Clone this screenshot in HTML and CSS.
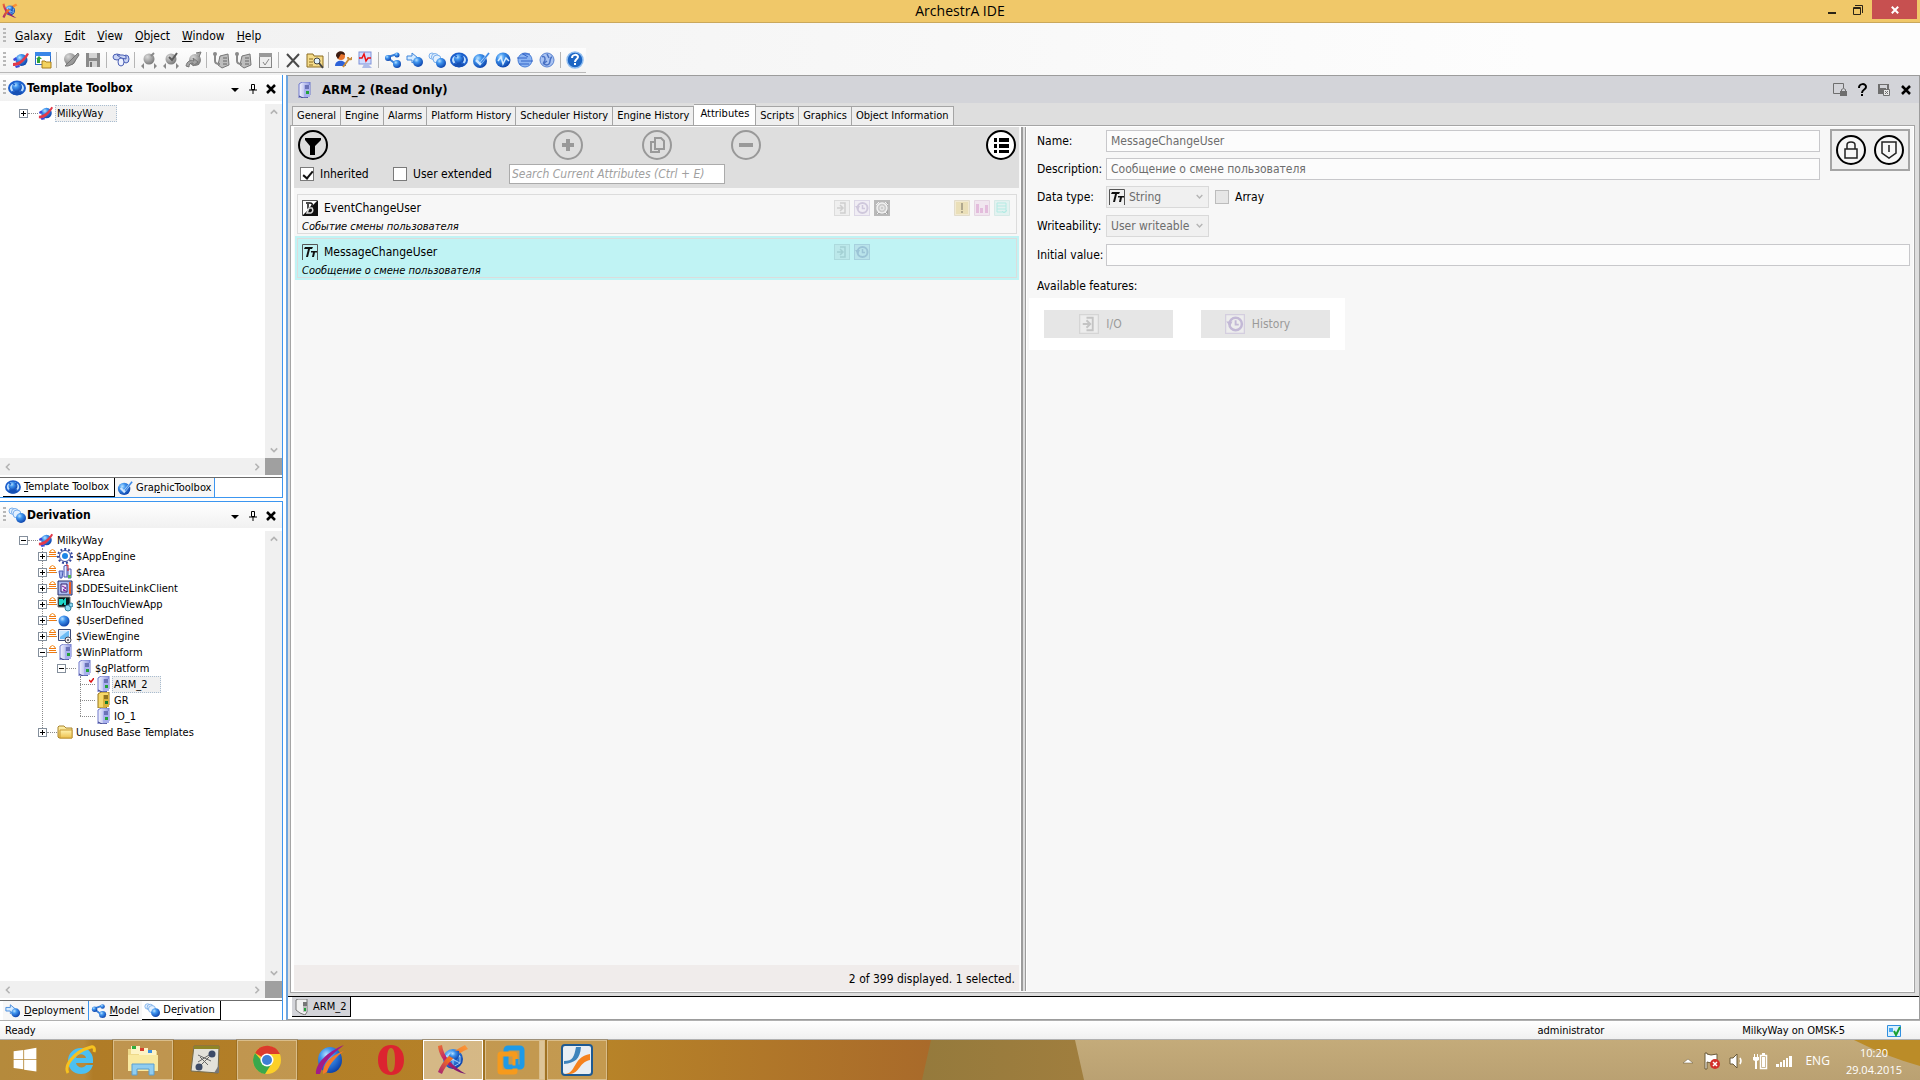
FILE: index.html
```html
<!DOCTYPE html>
<html lang="en">
<head>
<meta charset="utf-8">
<title>ArchestrA IDE</title>
<link rel="stylesheet" href="styles.css">
</head>
<body>
<svg class="defs" aria-hidden="true">
  <defs>
    <radialGradient id="ball" cx="35%" cy="30%" r="75%"><stop offset="0" stop-color="#b8e2ff"/><stop offset=".35" stop-color="#3f94ee"/><stop offset="1" stop-color="#0a3fa8"/></radialGradient>
    <radialGradient id="grayball" cx="35%" cy="30%" r="75%"><stop offset="0" stop-color="#d8d8d8"/><stop offset="1" stop-color="#777"/></radialGradient>
    <linearGradient id="tower" x1="0" x2="1"><stop offset="0" stop-color="#f4f5ff"/><stop offset="1" stop-color="#8f98e0"/></linearGradient>
    <linearGradient id="folder" x1="0" y1="0" x2="0" y2="1"><stop offset="0" stop-color="#fff3b0"/><stop offset="1" stop-color="#ecc04e"/></linearGradient>
    <linearGradient id="purple" x1="0" y1="0" x2="1" y2="1"><stop offset="0" stop-color="#f0742c"/><stop offset=".35" stop-color="#c0246c"/><stop offset="1" stop-color="#6a1470"/></linearGradient>
    <linearGradient id="orange" x1="0" y1="1" x2="1" y2="0"><stop offset="0" stop-color="#a0207c"/><stop offset=".4" stop-color="#f26a20"/><stop offset="1" stop-color="#fb9a3a"/></linearGradient>
  </defs>
  <symbol id="i-x-logo" viewBox="0 0 32 32"><circle cx="16" cy="15" r="10" fill="url(#ball)"/><path d="M9 12l7-4 7 4v7l-7 4-7-4zM9 12l14 7M23 12L9 19M16 8v15" fill="none" stroke="#bfe2ff" stroke-width=".8"/><path d="M1 2l4-1C6 12 16 23 29 30 13 27 2 14 1 2z" fill="url(#purple)"/><path d="M31 5l-3-4C15 7 5 17 1 28l4 2C9 20 19 10 31 5z" fill="url(#orange)"/><path d="M12 12c1-4 6-6 10-5 1 3 0 7-3 9z" fill="url(#ball)"/></symbol>
  <symbol id="i-galaxy" viewBox="0 0 18 18"><circle cx="9.500" cy="9" r="6" fill="url(#ball)"/><path d="M1 15c6 1 12-5 16-12l-2-1C12 7 7 12 1 12z" fill="#e23a4a"/><path d="M1 8l3-2 1 3-3 1zM3 15l4-1 1 2-4 1z" fill="#3b49d8"/></symbol>
  <symbol id="i-open" viewBox="0 0 18 18"><rect x="1.500" y="1.500" width="15" height="12" fill="#fff" stroke="#2d6cc8"/><path d="M1 1h16v4H1z" fill="#3a86e8"/><path d="M3 12V8l-1 0 3-3 3 3H6v4z" fill="#2fa336"/><path d="M8 10h3l1 1h5v6H8z" fill="#f3d35f" stroke="#a97f1c"/></symbol>
  <symbol id="i-gray-check" viewBox="0 0 18 18"><circle cx="8" cy="8" r="6" fill="url(#grayball)"/><path d="M3 15L16 2l1 2-6 9-5 2z" fill="#9a9a9a" stroke="#777"/></symbol>
  <symbol id="i-save" viewBox="0 0 18 18"><path d="M2 2h14v14H2z" fill="#8a8a8a"/><path d="M5 2h8v5H5zM5 10h8v6H5z" fill="#d4d4d4"/><path d="M6 11h2v5H6z" fill="#777"/></symbol>
  <symbol id="i-link" viewBox="0 0 18 18"><g stroke="#4a5fb4" fill="#c9d4f4"><ellipse cx="5" cy="6" rx="4" ry="3"/><ellipse cx="14" cy="8" rx="3" ry="4"/><path d="M5 4h6l3 1v3l-5-1z"/><ellipse cx="9" cy="11" rx="3" ry="4" fill="#eef2ff"/></g></symbol>
  <symbol id="i-gray-arrows" viewBox="0 0 18 18"><circle cx="9" cy="8" r="5.500" fill="url(#grayball)"/><path d="M4 12l-3 3 3 3zM14 12l3 3-3 3z" fill="#888"/><path d="M11 5l3-3" stroke="#888" stroke-width="2"/></symbol>
  <symbol id="i-gray-arrows2" viewBox="0 0 18 18"><circle cx="9" cy="8" r="5.500" fill="url(#grayball)"/><path d="M7 6l3 3 5-7" stroke="#5c5c5c" fill="none" stroke-width="2"/><path d="M4 12l-3 3 3 3zM14 12l3 3-3 3z" fill="#888"/></symbol>
  <symbol id="i-gray-orbit" viewBox="0 0 18 18"><circle cx="11" cy="9" r="6" fill="url(#grayball)"/><path d="M2 15c1-5 4-6 8-5l-1-3 5 4-5 4v-3c-3 0-4 1-4 4zM12 2l5-1-2 5" fill="#a5a5a5" stroke="#777"/></symbol>
  <symbol id="i-gray-server" viewBox="0 0 18 18"><path d="M8 5l8-2 1 11-7 3-4-3z" fill="#bdbdbd" stroke="#777"/><path d="M11 7h4M11 10h4M11 13h4" stroke="#666"/><path d="M3 2v8c0 2 2 3 5 3" stroke="#8a8a8a" stroke-width="2" fill="none"/><circle cx="3" cy="3" r="2" fill="#8a8a8a"/></symbol>
  <symbol id="i-gray-form" viewBox="0 0 18 18"><rect x="3.500" y="2.500" width="12" height="14" fill="#eee" stroke="#858585"/><path d="M3 2h13v4H3z" fill="#999"/><path d="M7 11l2 3 4-6" stroke="#888" fill="none"/></symbol>
  <symbol id="i-delete" viewBox="0 0 18 18"><path d="M3 3l12 13M15 3L3 16" stroke="#4a4a4a" stroke-width="2" fill="none"/></symbol>
  <symbol id="i-find" viewBox="0 0 18 18"><path d="M1 3h6l1 2h9v11H1z" fill="#f5dc8a" stroke="#8c6c22"/><path d="M3 8h4M3 11h4M3 14h4" stroke="#8c6c22"/><circle cx="11" cy="10" r="3" fill="#dff2ff" stroke="#444"/><path d="M13 12l4 5" stroke="#444" stroke-width="2"/></symbol>
  <symbol id="i-user" viewBox="0 0 18 18"><circle cx="7" cy="5" r="4" fill="#e8742e"/><path d="M2 5c0-6 9-6 9-1L7 3 4 8z" fill="#3c1c12"/><path d="M1 15c0-7 11-7 11 0z" fill="#2d62d8"/><path d="M9 16l6-8m-1-2c0 3 4 3 4 0" stroke="#c88b3c" stroke-width="2" fill="none"/></symbol>
  <symbol id="i-monitor" viewBox="0 0 18 18"><rect x="3" y="1" width="12" height="12" fill="#cfdcff" stroke="#7f92d8"/><path d="M3 7h3l2-4 2 7 2-3h3" stroke="#e11" fill="none" stroke-width="1.500"/><path d="M8 13h4l4 4H6z" fill="#aebce8"/></symbol>
  <symbol id="i-model" viewBox="0 0 18 18"><path d="M4 6l9-3M4 7l9 7" stroke="#3a7fd8" stroke-width="2"/><circle cx="4" cy="7" r="3" fill="url(#ball)"/><circle cx="13" cy="4" r="2.500" fill="url(#ball)"/><circle cx="13" cy="13" r="4" fill="url(#ball)"/></symbol>
  <symbol id="i-deploy" viewBox="0 0 18 18"><path d="M1 5h5V2l6 5-6 5V9H1z" fill="#d5ebff" stroke="#3f86dc"/><circle cx="12" cy="11" r="5" fill="url(#ball)"/></symbol>
  <symbol id="i-derive" viewBox="0 0 18 18"><g fill="#e4f1ff" stroke="#7db1ec"><circle cx="4" cy="5" r="3"/><circle cx="7" cy="6" r="3.500"/><circle cx="9" cy="8" r="4"/></g><circle cx="13" cy="12" r="5" fill="url(#ball)"/></symbol>
  <symbol id="i-toolbox" viewBox="0 0 18 18"><ellipse cx="9" cy="9" rx="8" ry="6.500" fill="#bfe0ff" stroke="#1c5fcc" stroke-width="2"/><circle cx="9" cy="8" r="5" fill="url(#ball)"/><path d="M3 14c3-3 9-3 12 0-3 3-9 3-12 0z" fill="#1650b4"/><path d="M4 4l3 2M14 4l-3 2M4 13l3-2M14 13l-3-2" stroke="#1c5fcc" stroke-width="1.500"/></symbol>
  <symbol id="i-graphic" viewBox="0 0 18 18"><circle cx="8" cy="10" r="7" fill="url(#ball)"/><path d="M4 9l4 4 9-11" stroke="#cfe6ff" stroke-width="2.500" fill="none"/><path d="M9 12l8-10" stroke="#3c87e4" fill="none" stroke-width="1.500"/></symbol>
  <symbol id="i-wave" viewBox="0 0 18 18"><circle cx="9" cy="9" r="7.500" fill="url(#ball)"/><path d="M4 10l3-4 2 7 3-6 3 3" stroke="#d8ecff" fill="none" stroke-width="1.500"/></symbol>
  <symbol id="i-globe" viewBox="0 0 18 18"><circle cx="9" cy="9" r="7" fill="#8cb4f2" stroke="#4a7fd6"/><path d="M1 7h10M5 10h12M3 13h10M6 3h8M7 3l5 3" stroke="#3264c8" fill="none"/></symbol>
  <symbol id="i-globe2" viewBox="0 0 18 18"><circle cx="9" cy="9" r="7" fill="#a9c3f2" stroke="#5a83d0"/><path d="M4 6c3-2 4 3 2 5s3 4 5 2 0-6 3-7M9 3l2 4M5 13l4-3" stroke="#4a72c4" fill="none" stroke-width="1.500"/></symbol>
  <symbol id="i-help" viewBox="0 0 18 18"><circle cx="9" cy="9" r="8" fill="#1d66c4" stroke="#8fbdf0" stroke-width="1.500"/><path d="M6 7c0-4 6-4 6-1 0 2-3 2-3 5M9 12v2" stroke="#fff" stroke-width="2" fill="none"/></symbol>
  <symbol id="i-platform" viewBox="0 0 16 16"><path d="M3 2l3-2h8v13l-3 3H3z" fill="url(#tower)" stroke="#6f78cc"/><path d="M8 3h6v12H8z" fill="#a9b1ee"/><path d="M9 4h4M9 6h4" stroke="#2c3480"/><path d="M10 9h3v3h-3z" fill="#22a33a"/><path d="M3 14l4 2h5" stroke="#333a84" fill="none"/></symbol>
  <symbol id="i-platform-gold" viewBox="0 0 16 16"><path d="M3 2l3-2h8v13l-3 3H3z" fill="#f6d96b" stroke="#96741a"/><path d="M8 3h6v12H8z" fill="#d8b23c"/><path d="M9 4h4M9 6h4" stroke="#4b3806"/><path d="M10 9h3v3h-3z" fill="#157c2a"/></symbol>
  <symbol id="i-platform-mono" viewBox="0 0 16 16"><path d="M2 1l2-1h9v13l-2 3-5-2-4-3z" fill="#f1f1f1" stroke="#777"/><path d="M9 3h4v10H9z" fill="#bbb"/><path d="M9 4h4M9 6h4" stroke="#333"/><path d="M10 9h2v3h-2z" fill="#22a33a"/></symbol>
  <symbol id="i-engine" viewBox="0 0 16 16"><circle cx="8" cy="8" r="5.500" fill="#fff" stroke="#33479c"/><circle cx="8" cy="8" r="7" fill="none" stroke="#33479c" stroke-width="2" stroke-dasharray="2 2"/><circle cx="8" cy="8" r="3" fill="#1c86e6"/></symbol>
  <symbol id="i-area" viewBox="0 0 16 16"><path d="M7 2l3-1v12H7zM11 5h3v9h-3z" fill="#e8ecff" stroke="#4858b4"/><path d="M9 1h2v6" stroke="#d22" fill="none"/><path d="M2 7h4l-1 7H3z" fill="#9fb2ee" stroke="#4858b4"/><path d="M11 11h3v3h-3z" fill="#54b854"/></symbol>
  <symbol id="i-dde" viewBox="0 0 16 16"><path d="M1 1h14v14H1z" fill="#a9b9ee" stroke="#222a66"/><path d="M12 2h2v12h-2z" fill="#f05a1c"/><path d="M4 4h6v8H4z" fill="#e6e0ff" stroke="#33206e"/><path d="M5 6l4 2-3 2 3 1" stroke="#7a1ca0" fill="none"/></symbol>
  <symbol id="i-intouch" viewBox="0 0 16 16"><path d="M1 1h12v10H1z" fill="#061a1c" stroke="#777"/><path d="M3 9V4h2v3l3-3v5" stroke="#20d6c8" fill="none" stroke-width="2"/><circle cx="11" cy="12" r="3" fill="#8cd8f0" stroke="#2d7fa0"/><circle cx="14" cy="9" r="2" fill="#8cd8f0" stroke="#2d7fa0"/></symbol>
  <symbol id="i-userdef" viewBox="0 0 16 16"><circle cx="7" cy="9" r="5.500" fill="url(#ball)"/></symbol>
  <symbol id="i-view" viewBox="0 0 16 16"><path d="M1.500 1.500h12v11h-12z" fill="#e8eefa" stroke="#3b4a78"/><path d="M3 3h9v8H3z" fill="#6cbcf4"/><path d="M3 3h8l-8 6z" fill="#c4e6ff"/><circle cx="11" cy="12" r="3" fill="#eee" stroke="#445"/><circle cx="11" cy="12" r="1" fill="#445"/></symbol>
  <symbol id="i-folder" viewBox="0 0 16 16"><path d="M1 13V3l1-1h5l2 2h6v10H2z" fill="url(#folder)" stroke="#a9842c"/><path d="M3 14V6h12v8z" fill="url(#folder)" stroke="#c79a34"/></symbol>
  <symbol id="i-lock" viewBox="0 0 7 8"><path d="M1 4V2q2.500-3 5 0v2" fill="none" stroke="#f08a1c"/><path d="M0 3h7v1H0zM0 5h7v1H0zM0 7h7v1H0z" fill="#f07a10"/></symbol>
  <symbol id="i-io" viewBox="0 0 16 16"><rect x=".5" y=".5" width="15" height="15" fill="none" stroke="currentColor" opacity=".6"/><path d="M6 3h5v10H6M3 8h5M6 5l3 3-3 3" fill="none" stroke="currentColor" stroke-width="1.500"/></symbol>
  <symbol id="i-history" viewBox="0 0 16 16"><rect x=".5" y=".5" width="15" height="15" fill="none" stroke="currentColor" opacity=".6"/><circle cx="8.500" cy="8" r="5" fill="none" stroke="currentColor" stroke-width="2"/><path d="M1 6h5l-2 4z" fill="currentColor"/><path d="M8.500 5v3.500H11" fill="none" stroke="currentColor" stroke-width="1.500"/></symbol>
  <symbol id="i-alarm" viewBox="0 0 16 16"><path d="M0 0h16v16H0z" fill="#b9b9b9"/><path d="M14 2v12H2z" fill="#a5a5a5"/><circle cx="8" cy="8" r="5" fill="#ccc" stroke="#f2f2f2" stroke-width="1.500"/><circle cx="8" cy="8" r="2" fill="none" stroke="#f2f2f2"/><path d="M2 5l3-3M11 2l3 3M3 14l2-2M13 14l-2-2" stroke="#f2f2f2"/></symbol>
  <symbol id="i-tt" viewBox="0 0 16 16"><path d="M.5 16V.5h15V16" fill="none" stroke="#555"/><path d="M3 3h8l-1 2H8l-2 8H4l2-8H2zM9 7h6v1.500h-2L12 13h-2l1-4.500H9z" fill="#111"/></symbol>
  <symbol id="i-bool" viewBox="0 0 16 16"><path d="M0 0h16v16H0z" fill="#fff"/><path d="M16 0v16H0z" fill="#111"/><path d="M.5.5v15M0 .5h15" stroke="#555"/><path d="M4 3h4q3 0 2 2.500T7 8H6V4" fill="none" stroke="#111" stroke-width="1.500"/><path d="M7 8h3q2 3-1 5H5z" fill="none" stroke="#ddd" stroke-width="1.500"/></symbol>
  <symbol id="i-up" viewBox="0 0 10 10"><path d="M1 7l4-4 4 4" fill="none" stroke="#b4b4b4" stroke-width="2"/></symbol>
  <symbol id="i-down" viewBox="0 0 10 10"><path d="M1 3l4 4 4-4" fill="none" stroke="#b4b4b4" stroke-width="2"/></symbol>
  <symbol id="i-left" viewBox="0 0 10 10"><path d="M7 1L3 5l4 4" fill="none" stroke="#b4b4b4" stroke-width="2"/></symbol>
  <symbol id="i-right" viewBox="0 0 10 10"><path d="M3 1l4 4-4 4" fill="none" stroke="#b4b4b4" stroke-width="2"/></symbol>
  <symbol id="i-caret" viewBox="0 0 10 10"><path d="M1 4h8L5 8z"/></symbol>
  <symbol id="i-pin" viewBox="0 0 10 10"><path d="M3.500.5h3v5h-3zM1 6h8M5 6v4" fill="none" stroke="#000"/><path d="M6 1h1v5H6z"/></symbol>
  <symbol id="i-close" viewBox="0 0 10 10"><path d="M1 1l8 8M9 1L1 9" stroke="currentColor" stroke-width="2.500"/></symbol>
</svg>

<header class="titlebar">
  <svg class="app-icon"><use href="#i-x-logo"/></svg>
  <h1>ArchestrA IDE</h1>
  <div class="win-buttons">
    <button aria-label="Minimize"><svg viewBox="0 0 10 10" width="10" height="10"><path d="M1 7h8v2H1z" fill="#2b2416"/></svg></button>
    <button aria-label="Restore"><svg viewBox="0 0 10 10" width="10" height="10"><path d="M.5 2.500h7v7h-7zM.5 3.500h7M2 .5h7.500V8" fill="none" stroke="#2b2416"/></svg></button>
    <button class="win-close" aria-label="Close"><svg viewBox="0 0 10 10" width="8" height="8"><path d="M1 1l8 8M9 1L1 9" stroke="#fff" stroke-width="2.500"/></svg></button>
  </div>
</header>

<div class="chrome">
  <nav class="menubar">
    <i class="grip"></i>
    <button><u>G</u>alaxy</button><button><u>E</u>dit</button><button><u>V</u>iew</button><button><u>O</u>bject</button><button><u>W</u>indow</button><button><u>H</u>elp</button>
  </nav>
  <div class="toolbar">
    <i class="grip"></i>
    <button aria-label="Galaxy"><svg><use href="#i-galaxy"/></svg></button>
    <button aria-label="Open"><svg><use href="#i-open"/></svg></button>
    <i class="sep"></i>
    <button aria-label="Check in"><svg><use href="#i-gray-check"/></svg></button>
    <button aria-label="Save"><svg><use href="#i-save"/></svg></button>
    <i class="sep"></i>
    <button aria-label="Instances"><svg><use href="#i-link"/></svg></button>
    <i class="sep"></i>
    <button aria-label="Check out"><svg><use href="#i-gray-arrows"/></svg></button>
    <button aria-label="Validate"><svg><use href="#i-gray-arrows2"/></svg></button>
    <button aria-label="Undo"><svg><use href="#i-gray-orbit"/></svg></button>
    <i class="sep"></i>
    <button aria-label="Deploy"><svg><use href="#i-gray-server"/></svg></button>
    <button aria-label="Undeploy"><svg><use href="#i-gray-server"/></svg></button>
    <button aria-label="Properties"><svg><use href="#i-gray-form"/></svg></button>
    <i class="sep"></i>
    <button aria-label="Delete"><svg><use href="#i-delete"/></svg></button>
    <button aria-label="Find"><svg><use href="#i-find"/></svg></button>
    <i class="sep"></i>
    <button aria-label="User"><svg><use href="#i-user"/></svg></button>
    <button aria-label="Monitor"><svg><use href="#i-monitor"/></svg></button>
    <i class="sep"></i>
    <button aria-label="Model"><svg><use href="#i-model"/></svg></button>
    <button aria-label="Deployment"><svg><use href="#i-deploy"/></svg></button>
    <button aria-label="Derivation"><svg><use href="#i-derive"/></svg></button>
    <button aria-label="Template Toolbox"><svg><use href="#i-toolbox"/></svg></button>
    <button aria-label="Graphic Toolbox"><svg><use href="#i-graphic"/></svg></button>
    <button aria-label="Operations"><svg><use href="#i-wave"/></svg></button>
    <button aria-label="Application"><svg><use href="#i-globe"/></svg></button>
    <button aria-label="Search views"><svg><use href="#i-globe2"/></svg></button>
    <i class="sep"></i>
    <button aria-label="Help"><svg><use href="#i-help"/></svg></button>
  </div>
</div>

<main class="workspace">
  <aside class="sidebar">
    <section class="dock dock-top">
      <header class="dock-head">
        <i class="grip"></i><svg class="ic18"><use href="#i-toolbox"/></svg><h2>Template Toolbox</h2>
        <button aria-label="Menu"><svg><use href="#i-caret"/></svg></button><button aria-label="Pin"><svg><use href="#i-pin"/></svg></button><button aria-label="Close"><svg><use href="#i-close"/></svg></button>
      </header>
      <div class="scroller">
        <ul class="tree">
          <li><div class="row"><button class="exp plus" aria-label="Expand"></button><i class="dots"></i><svg class="ic16"><use href="#i-galaxy"/></svg><span class="sel">MilkyWay</span></div></li>
        </ul>
        <div class="vbar"><svg><use href="#i-up"/></svg><svg><use href="#i-down"/></svg></div>
        <div class="hbar"><svg><use href="#i-left"/></svg><svg><use href="#i-right"/></svg></div>
        <div class="corner"></div>
      </div>
      <nav class="dock-tabs">
        <button class="on"><svg class="ic16"><use href="#i-toolbox"/></svg><span><u>T</u>emplate Toolbox</span></button>
        <button class="off"><svg class="ic16"><use href="#i-graphic"/></svg><span>Gra<u>p</u>hicToolbox</span></button>
      </nav>
    </section>
    <section class="dock dock-bottom">
      <header class="dock-head">
        <i class="grip"></i><svg class="ic18"><use href="#i-derive"/></svg><h2>Derivation</h2>
        <button aria-label="Menu"><svg><use href="#i-caret"/></svg></button><button aria-label="Pin"><svg><use href="#i-pin"/></svg></button><button aria-label="Close"><svg><use href="#i-close"/></svg></button>
      </header>
      <div class="scroller">
        <ul class="tree">
          <li><div class="row"><button class="exp" aria-label="Collapse"></button><i class="dots"></i><svg class="ic16"><use href="#i-galaxy"/></svg><span>MilkyWay</span></div>
            <ul class="guide">
              <li><div class="row"><button class="exp plus" aria-label="Expand"></button><i class="dots"><svg class="lock"><use href="#i-lock"/></svg></i><svg class="ic16"><use href="#i-engine"/></svg><span>$AppEngine</span></div></li>
              <li><div class="row"><button class="exp plus" aria-label="Expand"></button><i class="dots"><svg class="lock"><use href="#i-lock"/></svg></i><svg class="ic16"><use href="#i-area"/></svg><span>$Area</span></div></li>
              <li><div class="row"><button class="exp plus" aria-label="Expand"></button><i class="dots"><svg class="lock"><use href="#i-lock"/></svg></i><svg class="ic16"><use href="#i-dde"/></svg><span>$DDESuiteLinkClient</span></div></li>
              <li><div class="row"><button class="exp plus" aria-label="Expand"></button><i class="dots"><svg class="lock"><use href="#i-lock"/></svg></i><svg class="ic16"><use href="#i-intouch"/></svg><span>$InTouchViewApp</span></div></li>
              <li><div class="row"><button class="exp plus" aria-label="Expand"></button><i class="dots"><svg class="lock"><use href="#i-lock"/></svg></i><svg class="ic16"><use href="#i-userdef"/></svg><span>$UserDefined</span></div></li>
              <li><div class="row"><button class="exp plus" aria-label="Expand"></button><i class="dots"><svg class="lock"><use href="#i-lock"/></svg></i><svg class="ic16"><use href="#i-view"/></svg><span>$ViewEngine</span></div></li>
              <li><div class="row"><button class="exp" aria-label="Collapse"></button><i class="dots"><svg class="lock"><use href="#i-lock"/></svg></i><svg class="ic16"><use href="#i-platform"/></svg><span>$WinPlatform</span></div>
                <ul>
                  <li><div class="row"><button class="exp" aria-label="Collapse"></button><i class="dots"></i><svg class="ic16"><use href="#i-platform"/></svg><span>$gPlatform</span></div>
                    <ul class="guide">
                      <li><div class="row"><i class="dots leaf"><svg class="tick" viewBox="0 0 5 5"><path d="M0 2l2 2 3-4" fill="none" stroke="#d11" stroke-width="1.500"/></svg></i><svg class="ic16"><use href="#i-platform"/></svg><span class="sel">ARM_2</span></div></li>
                      <li><div class="row"><i class="dots leaf"></i><svg class="ic16"><use href="#i-platform-gold"/></svg><span>GR</span></div></li>
                      <li><div class="row"><i class="dots leaf"></i><svg class="ic16"><use href="#i-platform"/></svg><span>IO_1</span></div></li>
                    </ul>
                  </li>
                </ul>
              </li>
              <li><div class="row"><button class="exp plus" aria-label="Expand"></button><i class="dots"></i><svg class="ic16"><use href="#i-folder"/></svg><span>Unused Base Templates</span></div></li>
            </ul>
          </li>
        </ul>
        <div class="vbar"><svg><use href="#i-up"/></svg><svg><use href="#i-down"/></svg></div>
        <div class="hbar"><svg><use href="#i-left"/></svg><svg><use href="#i-right"/></svg></div>
        <div class="corner"></div>
      </div>
      <nav class="dock-tabs">
        <button class="off"><svg class="ic16"><use href="#i-deploy"/></svg><span><u>D</u>eployment</span></button>
        <button class="plain"><svg class="ic16"><use href="#i-model"/></svg><span><u>M</u>odel</span></button>
        <button class="on"><svg class="ic16"><use href="#i-derive"/></svg><span>De<u>r</u>ivation</span></button>
      </nav>
    </section>
  </aside>

  <section class="editor">
    <header class="editor-head">
      <svg class="ic16"><use href="#i-platform"/></svg>
      <h2>ARM_2 (Read Only)</h2>
      <button aria-label="Lock"><svg viewBox="0 0 14 14"><path d="M7 10.500H.5V.5h10V5" fill="none" stroke="#6e6e6e"/><path d="M7 8h7v5H7z" fill="#6e6e6e"/><path d="M8.500 8V6.500q2-2 4 0V8" fill="none" stroke="#6e6e6e"/></svg></button>
      <button aria-label="Help"><svg viewBox="0 0 14 14"><path d="M4 5c0-5 7-5 7-1 0 3-4 2-4 6M7 11v2" fill="none" stroke="#000" stroke-width="2"/></svg></button>
      <button aria-label="Save and close"><svg viewBox="0 0 14 14"><path d="M1 1h11v5h-2V2H3v3h6v6H1z" fill="#6e6e6e"/><path d="M6.500 6.500h6v6h-6z" fill="#e8e8e8" stroke="#6e6e6e"/><path d="M8 8l3 3M11 8l-3 3" stroke="#6e6e6e"/></svg></button>
      <button aria-label="Close"><svg viewBox="0 0 14 14"><path d="M3 3l8 8M11 3l-8 8" stroke="#000" stroke-width="2.500"/></svg></button>
    </header>
    <nav class="tabs">
      <button>General</button><button>Engine</button><button>Alarms</button><button>Platform History</button><button>Scheduler History</button><button>Engine History</button><button class="active">Attributes</button><button>Scripts</button><button>Graphics</button><button>Object Information</button>
    </nav>
    <div class="page">
      <section class="list-pane">
        <div class="list-tools">
          <div class="circles">
            <button class="circ push" aria-label="Filter"><svg viewBox="0 0 30 30"><circle cx="15" cy="15" r="14" fill="none" stroke="#000" stroke-width="2"/><path d="M7 8h16v2l-6 6v9h-5v-9L7 10z"/></svg></button>
            <button class="circ dim" aria-label="Add"><svg viewBox="0 0 30 30"><circle cx="15" cy="15" r="14" fill="none" stroke="#999" stroke-width="2"/><path d="M13 9h4v4h4v4h-4v4h-4v-4H9v-4h4z" fill="#999"/></svg></button>
            <button class="circ dim" aria-label="Duplicate"><svg viewBox="0 0 30 30"><circle cx="15" cy="15" r="14" fill="none" stroke="#999" stroke-width="2"/><path d="M13 8h6l3 3v8h-9zM13 12H9v10h8v-3" fill="none" stroke="#999" stroke-width="2"/></svg></button>
            <button class="circ dim" aria-label="Remove"><svg viewBox="0 0 30 30"><circle cx="15" cy="15" r="14" fill="none" stroke="#999" stroke-width="2"/><path d="M8 13h14v4H8z" fill="#999"/></svg></button>
            <button class="circ last" aria-label="List view"><svg viewBox="0 0 30 30"><circle cx="15" cy="15" r="14" fill="#fff" stroke="#000" stroke-width="2"/><path d="M8 8h3v4H8zM8 14h3v4H8zM8 20h3v3H8zM13 8h10v4H13zM13 14h10v4H13zM13 20h10v3H13z"/></svg></button>
          </div>
          <div class="filters">
            <label class="check inherited"><input type="checkbox" checked>Inherited</label>
            <label class="check extended"><input type="checkbox">User extended</label>
            <input class="search" type="text" aria-label="Search" placeholder="Search Current Attributes (Ctrl + E)">
          </div>
        </div>
        <div class="cards">
          <article class="card">
            <div class="card-in">
              <div class="card-top"><svg class="ic16"><use href="#i-bool"/></svg><h3>EventChangeUser</h3>
                <div class="marks">
                  <svg class="m-gray"><use href="#i-io"/></svg><svg class="m-violet"><use href="#i-history"/></svg><svg><use href="#i-alarm"/></svg><i class="gap"></i>
                  <svg viewBox="0 0 16 16"><path d="M.5.5h15v15H.5z" fill="#f2ead2" stroke="#e2dccb"/><path d="M2 2h12v12H2z" fill="#eadfb8"/><path d="M7 3h2v7H7zM7 11h2v2H7z" fill="#b0a88e"/></svg>
                  <svg viewBox="0 0 16 16"><path d="M.5.5h15v15H.5z" fill="#f1e6ef" stroke="#e5d6e2"/><path d="M2 4h3v9H2zM6 8h3v5H6zM11 5h3v8h-3z" fill="#e3bcdc"/></svg>
                  <svg viewBox="0 0 16 16"><path d="M.5.5h15v15H.5z" fill="#e3f2f0" stroke="#d6eae7"/><path d="M3 3h9v9H3zM3 6h9M3 9h9M8 11l2 2 3-3" fill="none" stroke="#b4ebe4"/></svg>
                </div>
              </div>
              <p>Событие смены пользователя</p>
            </div>
          </article>
          <article class="card selected">
            <div class="card-in">
              <div class="card-top"><svg class="ic16"><use href="#i-tt"/></svg><h3>MessageChangeUser</h3>
                <div class="marks"><svg class="m-teal"><use href="#i-io"/></svg><svg class="m-blue"><use href="#i-history"/></svg></div>
              </div>
              <p>Сообщение о смене пользователя</p>
            </div>
          </article>
        </div>
        <footer class="list-foot">2 of 399 displayed. 1 selected.</footer>
      </section>
      <div class="splitter"></div>
      <form class="detail">
        <div class="upper">
          <div class="fields">
            <label for="f-name">Name:</label><input id="f-name" type="text" value="MessageChangeUser" disabled>
            <label for="f-desc">Description:</label><input id="f-desc" type="text" value="Сообщение о смене пользователя" disabled>
          </div>
          <div class="security">
            <button type="button" class="circ" aria-label="Lock"><svg viewBox="0 0 30 30"><circle cx="15" cy="15" r="14" fill="#f7f7f7" stroke="#000" stroke-width="2"/><path d="M9 14h12v9H9zM11 14v-4q0-3 4-3t4 3v4" fill="none" stroke="#222" stroke-width="1.500"/></svg></button>
            <button type="button" class="circ" aria-label="Security"><svg viewBox="0 0 30 30"><circle cx="15" cy="15" r="14" fill="#f7f7f7" stroke="#000" stroke-width="2"/><path d="M8 7h14v11l-7 5-7-5zM15 10v7" fill="none" stroke="#222" stroke-width="1.500"/></svg></button>
          </div>
        </div>
        <div class="fields lower">
          <label for="f-type">Data type:</label>
          <div class="line">
            <span class="pick with-icon"><select id="f-type" disabled><option>String</option></select><svg class="pick-icon ic16"><use href="#i-tt"/></svg><svg class="pick-arrow"><use href="#i-down"/></svg></span>
            <label class="check array"><input type="checkbox" disabled>Array</label>
          </div>
          <label for="f-write">Writeability:</label>
          <div class="line"><span class="pick"><select id="f-write" disabled><option>User writeable</option></select><svg class="pick-arrow"><use href="#i-down"/></svg></span></div>
          <label for="f-init">Initial value:</label><input id="f-init" type="text" disabled>
        </div>
        <h3 class="avail">Available features:</h3>
        <div class="features">
          <button type="button" disabled><svg class="f-io"><use href="#i-io"/></svg>I/O</button>
          <button type="button" disabled><svg class="f-hist"><use href="#i-history"/></svg>History</button>
        </div>
      </form>
    </div>
    <nav class="doc-tabs"><button><svg class="ic16"><use href="#i-platform-mono"/></svg>ARM_2</button></nav>
  </section>
</main>

<footer class="status">
  <span>Ready</span><span class="who">administrator</span><span class="where">MilkyWay on OMSK-5</span>
  <svg viewBox="0 0 14 12" width="14" height="12"><path d="M.5.5h13v11H.5z" fill="#d8f0ff" stroke="#2f8fe0"/><path d="M2 3h4v4H2z" fill="#4aa8ee"/><path d="M7 6l2 4 4-8" fill="none" stroke="#18a030" stroke-width="2"/></svg>
</footer>

<nav class="taskbar">
  <svg class="wall" viewBox="0 0 1920 40" preserveAspectRatio="none" aria-hidden="true">
    <defs>
      <linearGradient id="w1"><stop offset="0" stop-color="#b58a3c"/><stop offset=".09" stop-color="#b8893a"/><stop offset=".1" stop-color="#b07c27"/><stop offset=".65" stop-color="#b78328"/><stop offset="1" stop-color="#a96a2a"/></linearGradient>
      <linearGradient id="w2"><stop offset="0" stop-color="#957a3c"/><stop offset="1" stop-color="#a07e3e"/></linearGradient>
      <linearGradient id="w3" x1="0" y1="0" x2="0" y2="1"><stop offset="0" stop-color="#c4ab7a"/><stop offset="1" stop-color="#baa172"/></linearGradient>
    </defs>
    <path d="M0 0h932l-9 40H0z" fill="url(#w1)"/>
    <path d="M931 0h145l9 40H922z" fill="url(#w2)"/>
    <path d="M1075 0h845v40H1084z" fill="url(#w3)"/>
    <path d="M1854 0h66v26q-30-8-66-26z" fill="#bb8c28"/>
  </svg>
  <button class="start" aria-label="Start"><svg viewBox="0 0 32 32"><path d="M3 6l11-1.500V15H3zM15 4.500L29 2v13H15zM3 16h11v10.500L3 25zM15 16h14v13l-14-2z" fill="#fff"/></svg></button>
  <button aria-label="Internet Explorer"><svg viewBox="0 0 32 32"><path fill-rule="evenodd" d="M16 4c8 0 13 6 12 15H11c1 5 8 6 10 2h7c-2 6-6 9-12 9C8 30 3 24 3 17S8 4 16 4zm-5 10h10c-1-5-9-5-10 0z" fill="#4cc0f2"/><path d="M3 29C-1 22 8 8 26 3c3-1 4 2 3 5" fill="none" stroke="#f7c21e" stroke-width="3"/></svg></button>
  <button class="open" aria-label="Explorer"><svg viewBox="0 0 32 32"><path d="M1 5h10l2 2h17v20H1z" fill="#eed98a"/><path d="M4 2h9v8H4zM12 4h9v8h-9zM20 6h9v6h-9z" fill="#fdf3c4"/><path d="M5 2h4v3H5z" fill="#2fae3e"/><path d="M13 4h4v3h-4z" fill="#d8402c"/><path d="M21 6h4v3h-4z" fill="#3c90e0"/><path d="M1 11h30v16H1z" fill="#f9e9a0"/><path d="M5 31V20h22v11h-5v-6H10v6z" fill="#90cdf0" stroke="#5a9fd0"/></svg></button>
  <button aria-label="Drawing tool"><svg viewBox="0 0 32 32"><path d="M5 2h25l-1 27-27-2z" fill="#e3e1da" stroke="#746c50"/><path d="M5 2h25v3H5z" fill="#8f8526"/><path d="M25 29l5-8v8z" fill="#777"/><path d="M9 11l13 6M9 18l11-7M12 21l8-8M11 13l8 8" stroke="#666" fill="none"/><circle cx="23" cy="10" r="3.500" fill="#3c4a66"/><circle cx="10" cy="23" r="3.500" fill="#3c4a66"/></svg></button>
  <button class="open" aria-label="Chrome"><svg viewBox="0 0 32 32"><circle cx="16" cy="16" r="14" fill="#fbd028"/><path d="M16 16L4 9A14 14 0 0 1 29 10H16z" fill="#dc3a2c"/><path d="M4 9a14 14 0 0 0 10 21l7-11-5-3-6 0z" fill="#3aa84c"/><circle cx="16" cy="16" r="6.500" fill="#fff"/><circle cx="16" cy="16" r="5" fill="#3f7fd4"/></svg></button>
  <button aria-label="InTouch"><svg viewBox="0 0 32 32"><ellipse cx="17" cy="16" rx="12" ry="13" fill="url(#ball)"/><path d="M3 30C2 20 14 8 31 1 19 10 10 19 7 30z" fill="#a31a88"/><path d="M10 30C9 20 18 11 31 7 23 13 17 19 14 28z" fill="#f47a2a"/></svg></button>
  <button aria-label="Opera"><svg viewBox="0 0 32 32"><path fill-rule="evenodd" d="M16 1c8 0 13 6 13 15s-5 15-13 15S3 25 3 16 8 1 16 1zm0 3c-3 0-4 5-4 12s1 12 4 12 4-5 4-12-1-12-4-12z" fill="#dc2430"/></svg></button>
  <button class="open current" aria-label="ArchestrA IDE"><svg><use href="#i-x-logo"/></svg></button>
  <button class="open stack" aria-label="VMware"><svg viewBox="0 0 32 32"><rect x="11" y="4" width="16" height="19" rx="2" fill="none" stroke="#1f9ae6" stroke-width="5"/><rect x="5" y="10" width="15" height="18" rx="1" fill="none" stroke="#f69a1c" stroke-width="5"/><path d="M14 23h8v-8" fill="none" stroke="#1f9ae6" stroke-width="3"/></svg></button>
  <button class="open" aria-label="SmartSketch"><svg viewBox="0 0 32 32"><rect x="1" y="1" width="30" height="30" rx="3" fill="#e8eef4" stroke="#1e5a92" stroke-width="2"/><path d="M3 17c9 0 10-4 12-14h5c-1 12-6 16-17 17z" fill="#3d83bb"/><path d="M3 30c13 0 8-17 26-20v6C18 18 19 29 9 30z" fill="#f5821e"/></svg></button>
  <div class="tray">
    <svg viewBox="0 0 16 16" width="16" height="16"><path d="M3 10l5-4 5 4z" fill="#fff" stroke="#6b5a38" stroke-width=".5"/></svg>
    <svg viewBox="0 0 16 18" width="16" height="18"><path d="M1 17V1h2v1l4 1 6-1v8l-6 1-4-1v7z" fill="#fff" stroke="#6b5a38"/><circle cx="11" cy="12" r="5" fill="#d2302a"/><path d="M9 10l4 4M13 10l-4 4" stroke="#fff" stroke-width="1.500"/></svg>
    <svg viewBox="0 0 16 18" width="16" height="18"><path d="M2 6h3l4-4v14l-4-4H2z" fill="#fff" stroke="#6b5a38"/><path d="M12 6q2 3 0 6" stroke="#fff" fill="none" stroke-width="1.500"/></svg>
    <svg viewBox="0 0 16 18" width="16" height="18"><path d="M8.500 3.500h6v13h-6z" fill="none" stroke="#fff" stroke-width="1.500"/><path d="M10 1h3v2h-3zM10 5h3v10h-3zM2 2h1v3h2V2h1v3h1v3L5 9v8H3V9L1 8V5h1z" fill="#fff"/></svg>
    <svg viewBox="0 0 16 18" width="16" height="18"><path d="M0 12h3v3H0zM4 10h2v5H4zM7 8h2v7H7zM10 6h2v9h-2zM13 4h3v11h-3z" fill="#fff"/></svg>
    <span class="lang">ENG</span>
    <time class="clock"><span>10:20</span><span>29.04.2015</span></time>
  </div>
</nav>
</body>
</html>
```
FILE: styles.css
```css
:root {
  --ui: "DejaVu Sans Condensed", "DejaVu Sans", sans-serif;
  --seg: "Open Sans", "Noto Sans", sans-serif;
}
* { box-sizing: border-box; }
body {
  margin: 0;
  min-height: 100vh;
  display: flex;
  flex-direction: column;
  font: 11px/16px var(--ui);
  color: #000;
  background: #fff;
}
h1, h2, h3, p, ul { margin: 0; padding: 0; font-weight: normal; }
ul { list-style: none; }
button, input, select { font: inherit; color: inherit; margin: 0; }
button { border: 0; padding: 0; background: none; white-space: nowrap; }
svg { display: block; flex: none; }
.defs { position: absolute; width: 0; height: 0; }
.ic16 { width: 16px; height: 16px; }
.ic18 { width: 18px; height: 18px; }
.grip {
  width: 3px;
  height: 16px;
  flex: none;
  background: repeating-linear-gradient(#b8b8b8 0 2px, transparent 2px 4px);
}

/* Title bar */
.titlebar {
  display: grid;
  grid-template-columns: 1fr auto 1fr;
  align-items: center;
  height: 23px;
  background: #f0c869;
  border-bottom: 1px solid #caa85c;
}
.app-icon { width: 16px; height: 16px; margin-left: 2px; }
h1 { font: 14px/20px var(--seg); }
.win-buttons { display: flex; justify-content: flex-end; align-self: start; padding-right: 3px; }
.win-buttons button { width: 26px; height: 19px; display: flex; align-items: center; justify-content: center; }
.win-buttons .win-close { width: 45px; background: #c75050; margin-left: 1px; }

/* Menu and toolbar */
.chrome { background: linear-gradient(90deg, #f0f0f0, #fdfdfd 80%); height: 52px; }
.menubar { display: flex; align-items: center; gap: 12px; height: 25px; padding-left: 3px; font-size: 12px; }
.menubar .grip { margin-right: -3px; }
.toolbar {
  display: flex;
  align-items: center;
  gap: 4px;
  width: max-content;
  height: 25px;
  padding: 0 2px 0 3px;
  background: linear-gradient(#fdfdfd, #f3f3f3);
  border-bottom: 1px solid #b8b8b8;
}
.toolbar svg { width: 18px; height: 18px; }
.toolbar .grip { margin-right: 2px; }
.sep { width: 1px; height: 16px; margin-right: 1px; background: #b5b5b5; }

/* Workspace */
.workspace { flex: 1; display: grid; grid-template-columns: 286px minmax(0, 1fr); }
.sidebar { display: flex; flex-direction: column; gap: 3px; padding-right: 3px; background: #fff; }
.dock { display: flex; flex-direction: column; border-right: 1px solid #3c96f0; }
.dock-top { flex: 423 0 0; border-bottom: 1px solid #3c96f0; }
.dock-bottom { flex: 519 0 0; border-top: 1px solid #3c96f0; }
.dock-head {
  display: flex;
  align-items: center;
  height: 26px;
  padding: 0 2px 0 3px;
  background: linear-gradient(#fff, #f1f1f1);
}
.dock-head .ic18 { margin-left: 2px; }
.dock-head h2 { flex: 1; font-size: 12px; font-weight: bold; padding-left: 1px; }
.dock-head button { width: 18px; display: flex; justify-content: center; padding-top: 2px; }
.dock-head button svg { width: 10px; height: 10px; }
.scroller { flex: 1; display: grid; grid-template-columns: minmax(0, 1fr) 17px; grid-template-rows: minmax(0, 1fr) 17px; }
.vbar, .hbar { display: flex; justify-content: space-between; align-items: center; background: #f0f0f0; }
.vbar { flex-direction: column; padding: 4px 0; margin-top: 3px; }
.hbar { padding: 0 4px; }
.vbar svg, .hbar svg { width: 8px; height: 8px; }
.corner { background: #a0a0a0; }
.dock-tabs { display: flex; height: 20px; margin-top: 2px; border-top: 1px solid #6b6b6b; }
.dock-tabs button { display: flex; align-items: center; gap: 3px; height: 19px; padding: 0 3px 0 2px; background: #f7f7f7; }
.dock-tabs button:first-child { margin-left: 3px; }
.dock-tabs .on { padding-right: 5px; border-right: 1px solid #000; border-bottom: 1px solid #000; background: #fff; }
.dock-tabs .off { border-right: 1px solid #3c96f0; }

/* Trees */
.tree { padding: 4px 0 0 19px; overflow: hidden; }
.tree ul { padding-left: 19px; position: relative; }
.tree .guide::before { content: ""; position: absolute; left: 23px; top: 0; bottom: 8px; border-left: 1px dotted #8a8a8a; }
.row { display: flex; align-items: center; height: 16px; white-space: nowrap; position: relative; }
.row > span { padding: 1px 2px 0; margin-left: 1px; }
.row .sel { background: #f0f0f0; outline: 1px dotted #a8bcd0; outline-offset: -1px; padding-right: 14px; }
.exp {
  width: 9px;
  height: 9px;
  border: 1px solid #848f9c;
  background: linear-gradient(#000, #000) center / 5px 1px no-repeat #fff;
  flex: none;
}
.plus { background: linear-gradient(#000, #000) center / 5px 1px no-repeat, linear-gradient(#000, #000) center / 1px 5px no-repeat #fff; }
.dots { position: relative; width: 10px; height: 1px; flex: none; border-top: 1px dotted #8a8a8a; }
.leaf { width: 15px; margin-left: 4px; }
.lock { position: absolute; left: 2px; top: -8px; width: 7px; height: 8px; }
.tick { position: absolute; left: 9px; top: -7px; width: 5px; height: 5px; }

/* Editor */
.editor { display: flex; flex-direction: column; background: #dedede; border: solid #9c9c9c; border-width: 1px 1px 1px 2px; border-left-color: #6ea6e0; }
.editor-head { display: flex; align-items: center; height: 27px; padding: 0 6px 0 8px; background: #d3d4d9; }
.editor-head h2 { flex: 1; padding-left: 10px; font-size: 13px; font-weight: bold; }
.editor-head button { width: 14px; margin-left: 8px; }
.editor-head button svg { width: 14px; height: 14px; }
.tabs { display: flex; align-items: flex-end; height: 22px; padding-left: 4px; }
.tabs button { height: 19px; padding: 0 4px; background: #efefef; border: solid #a5a5a5; border-width: 1px 1px 0 1px; }
.tabs button + button { border-left-width: 0; }
.tabs .active { height: 21px; padding: 0 6px 2px; background: #fff; }
.page {
  flex: 1;
  display: grid;
  grid-template-columns: 727px 6px minmax(0, 1fr);
  margin: 0 4px 3px 2px;
  padding: 1px 1px 1px 3px;
  border: 1px solid #a5a5a5;
  background: #fff;
}
.list-pane { display: flex; flex-direction: column; margin-right: 1px; background: #f7f7f7; }
.list-tools { background: #dedede; padding: 3px 3px 4px 4px; margin-right: 1px; }
.circles { display: flex; gap: 59px; }
.circ { width: 30px; height: 30px; }
.circ svg { width: 30px; height: 30px; }
.push { margin-right: 166px; }
.last { margin-left: auto; }
.filters { display: flex; align-items: center; margin-top: 4px; padding-left: 2px; font-size: 12px; }
.check { display: flex; align-items: center; gap: 6px; }
.check input { appearance: none; position: relative; width: 14px; height: 14px; border: 1px solid #7a7a7a; background: #fff; }
.check input:checked::after { content: ""; position: absolute; left: 4px; top: 1px; width: 4px; height: 8px; border: solid #111; border-width: 0 2px 2px 0; transform: rotate(40deg); }
.inherited { width: 93px; }
.extended { width: 116px; }
.search { width: 216px; height: 20px; padding: 0 2px; border: 1px solid #ababab; background: #fff; }
.search::placeholder { color: #a0a0a0; font-style: italic; opacity: 1; }
.cards { flex: 1; padding: 4px 1px 0; }
.card { padding: 2px; }
.card-in { height: 40px; padding: 5px 6px 0 4px; border: 1px solid #dcdcdc; }
.card-top { display: flex; align-items: center; }
.card h3 { flex: 1; padding-left: 6px; font-size: 12px; }
.card p { font: italic 11px/16px var(--ui); padding-top: 3px; }
.selected { background: #c0f3f4; }
.marks { display: flex; gap: 4px; width: 176px; }
.marks svg { width: 16px; height: 16px; }
.marks .gap { width: 56px; }
.m-gray { color: #cfcfcf; background: #efefef; }
.m-violet { color: #cfc8dc; background: #f0edf4; }
.m-teal { color: #a3d0d3; background: #bce8ea; }
.m-blue { color: #9bc4d6; background: #b9e3ea; }
.list-foot { height: 26px; margin-right: 1px; padding: 5px 4px 0 0; text-align: right; font-size: 12px; line-height: 18px; background: #f0eceb; }
.splitter { border: solid #9c9c9c; border-width: 0 1px 0 2px; background: #dedede; margin-right: 1px; }

/* Attribute details */
.detail { padding: 2px 3px 0 0; background: #f7f7f7; font-size: 12px; }
.upper { display: grid; grid-template-columns: minmax(0, 1fr) auto; gap: 10px; }
.fields { display: grid; grid-template-columns: 69px minmax(0, 1fr); align-content: start; align-items: center; row-gap: 6px; padding: 1px 0 0 10px; }
.fields > label { white-space: nowrap; }
.fields > input, .pick select { width: 100%; height: 22px; padding: 0 4px; border: 1px solid #c8c8cb; background: #fcfcfc; color: #6d6d6d; }
.lower { padding-top: 6px; row-gap: 7px; }
.line { display: flex; align-items: center; gap: 6px; }
.pick { position: relative; width: 103px; }
.pick select { appearance: none; background: #f0f0f0; border-color: #d9d9d9; opacity: 1; border-radius: 0; display: block; }
.with-icon select { padding-left: 22px; }
.pick-icon { position: absolute; left: 3px; top: 3px; }
.pick-arrow { position: absolute; right: 6px; top: 7px; width: 7px; height: 7px; }
.array input { background: #e6e6e6; border-color: #bcbcbc; }
.security { display: flex; align-items: center; gap: 8px; padding: 0 4px; height: 42px; border: 2px solid #a5a5a5; background: #f0f0f0; }
.avail { padding: 12px 0 4px 10px; font-size: 12px; }
.features { display: flex; gap: 28px; width: max-content; padding: 12px 15px; margin-left: 2px; background: #fff; }
.features button { display: flex; align-items: center; justify-content: center; gap: 7px; width: 129px; height: 28px; padding-right: 16px; background: #e6e6e6; color: #9a9a9a; }
.features svg { width: 20px; height: 20px; background: #ededed; }
.f-io { color: #c4c4c4; }
.f-hist { color: #c3b9d6; }

.doc-tabs { display: flex; height: 23px; background: #fff; border-top: 1px solid #000; }
.doc-tabs button { display: flex; align-items: center; gap: 3px; height: 20px; margin-left: 4px; padding: 0 4px 0 2px; background: #d3d4d9; border: solid #000; border-width: 0 1px 1px 0; }

/* Status bar */
.status {
  display: flex;
  align-items: center;
  height: 20px;
  padding: 1px 19px 0 5px;
  background: linear-gradient(#fff, #f0f0f0);
  border: 1px solid #b0b0b0;
  border-width: 1px 0;
}
.who { margin-left: auto; }
.where { margin: 0 42px 0 138px; }

/* Taskbar */
.taskbar { position: relative; display: flex; gap: 2px; height: 40px; color: #fff; font-family: var(--seg); }
.wall { position: absolute; inset: 0; width: 100%; height: 100%; z-index: -1; }
.taskbar button { width: 60px; display: flex; align-items: center; justify-content: center; }
.taskbar button svg { width: 32px; height: 32px; }
.taskbar .start { width: 49px; }
.taskbar .start svg { width: 28px; height: 28px; }
.taskbar .open { background: #ffffff30; border: 1px solid #d9bd8a; outline: 1px solid #7c5a1c60; outline-offset: 0; }
.taskbar .current { background: #ffffff70; border-color: #fff; }
.taskbar .stack { box-shadow: inset -4px 0 #ffffff20, inset -5px 0 #d9bd8a; padding-right: 9px; }
.tray { margin-left: auto; display: flex; align-items: center; gap: 8px; padding: 1px 18px 0 0; }
.lang { font-size: 12px; margin-left: 5px; }
.clock { display: flex; flex-direction: column; align-items: center; font-size: 11px; line-height: 17px; margin-left: 8px; }
```
